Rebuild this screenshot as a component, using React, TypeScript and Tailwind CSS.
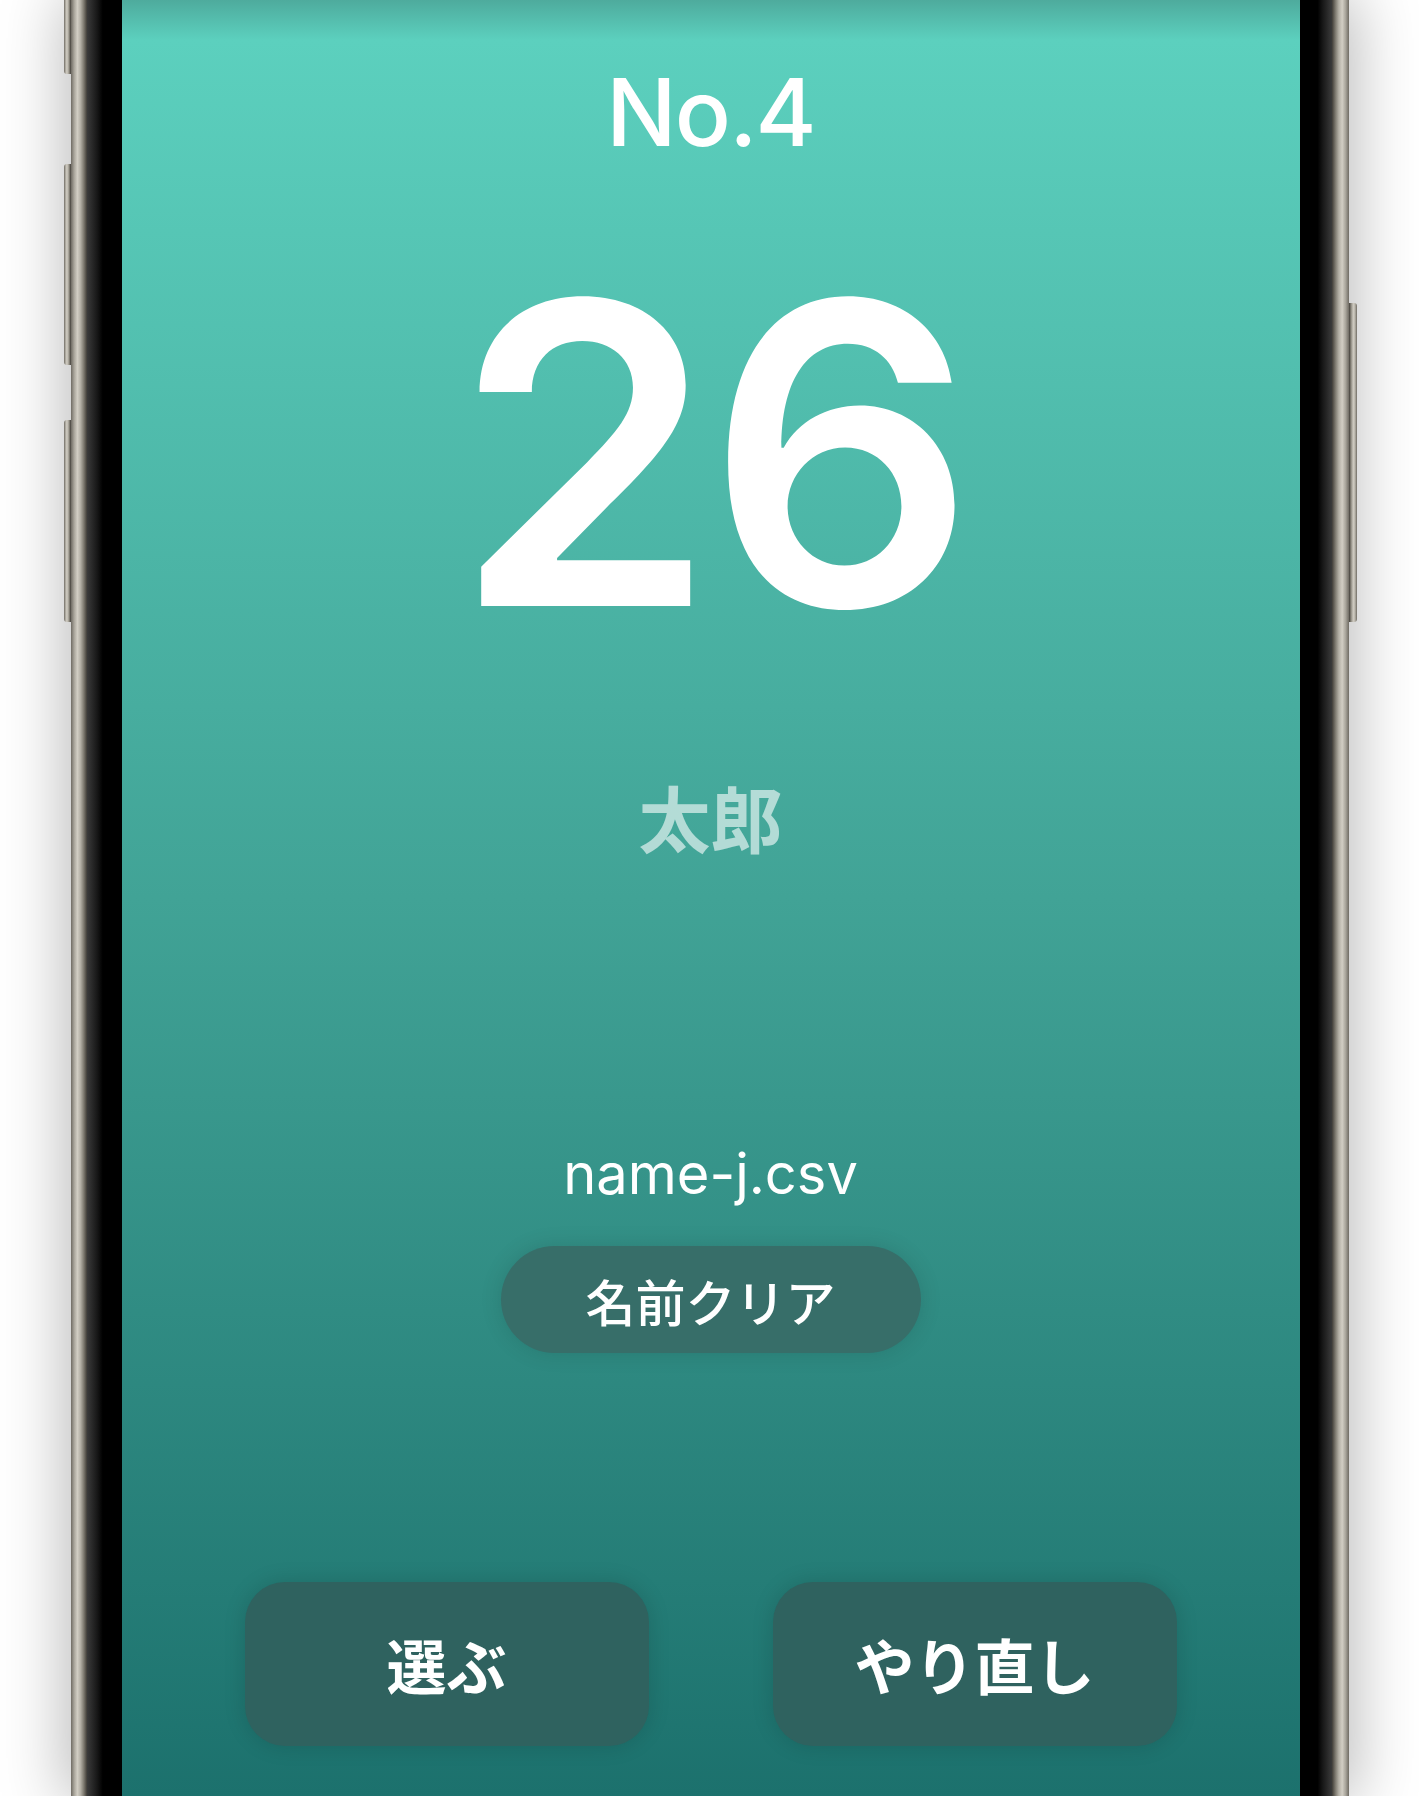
import React from "react";

const metalV =
  "bg-[linear-gradient(to_right,#6f6b63_0%,#a9a59b_20%,#d2cec4_40%,#b3afa5_60%,#7d796f_80%,#3f3c37_100%)]";
const metalVR =
  "bg-[linear-gradient(to_left,#6f6b63_0%,#a9a59b_20%,#d2cec4_40%,#b3afa5_60%,#7d796f_80%,#3f3c37_100%)]";

const SideButton = ({ className }: { className: string }) => (
  <div className={`absolute w-[7px] ${metalV} ${className}`} />
);

const ActionButton = ({ label }: { label: string }) => (
  <button className="flex-1 h-[164px] rounded-[40px] bg-[#2f625f] shadow-[0_0_22px_rgba(0,0,0,0.14)] text-white text-[60px] font-bold leading-none tracking-normal flex items-center justify-center">
    {label}
  </button>
);

export default function App() {
  return (
    <div className="w-full h-[1796px] overflow-hidden bg-white flex justify-center">
      <div className="relative w-[1278px] h-[1796px] flex shadow-[0_0_60px_6px_rgba(0,0,0,0.28)]">
        {/* side buttons */}
        <SideButton className="-left-[7px] -top-[40px] h-[114px] rounded-l-[3px]" />
        <SideButton className="-left-[7px] top-[164px] h-[201px] rounded-l-[3px]" />
        <SideButton className="-left-[7px] top-[420px] h-[202px] rounded-l-[3px]" />
        <div className={`absolute -right-[8px] top-[303px] h-[319px] w-[8px] rounded-r-[3px] ${metalVR}`} />

        {/* frame left */}
        <div className={`w-[16px] shrink-0 ${metalV}`} />
        <div className="w-[35px] shrink-0 bg-[linear-gradient(to_right,#3b3b3b_0%,#161616_30%,#000_45%,#000_100%)]" />

        {/* screen */}
        <div
          className="w-[1178px] shrink-0 flex flex-col items-center text-white bg-[linear-gradient(to_bottom,#4eab9d_0px,#5cd0be_40px,#41a396_50%,#1c716d_100%)]"
          style={{ fontFamily: "Inter, 'Noto Sans CJK JP', sans-serif" }}
        >
          <div className="mt-[66px] text-[93px] leading-none font-medium tracking-[-0.02em]">No.4</div>

          <div className="mt-[84px] text-[420px] leading-none font-semibold tracking-[-0.02em]">26</div>

          <div
            className="mt-[117px] text-[72px] leading-none font-bold text-white/60"
            style={{ fontFamily: "'Noto Sans CJK JP', sans-serif" }}
          >
            太郎
          </div>

          <div className="mt-[294px] text-[56px] leading-none font-normal">name-j.csv</div>

          <button
            className="mt-[44px] w-[420px] h-[107px] rounded-full bg-[#376e69] shadow-[0_0_22px_rgba(0,0,0,0.12)] text-white text-[50px] font-medium leading-none flex items-center justify-center"
            style={{ fontFamily: "'Noto Sans CJK JP', sans-serif" }}
          >
            名前クリア
          </button>

          <div
            className="mt-[229px] w-full px-[123px] flex gap-[124px]"
            style={{ fontFamily: "'Noto Sans CJK JP', sans-serif" }}
          >
            <ActionButton label="選ぶ" />
            <ActionButton label="やり直し" />
          </div>
        </div>

        {/* frame right */}
        <div className="w-[32px] shrink-0 bg-[linear-gradient(to_left,#3b3b3b_0%,#161616_30%,#000_45%,#000_100%)]" />
        <div className={`w-[17px] shrink-0 ${metalVR}`} />
      </div>
    </div>
  );
}
